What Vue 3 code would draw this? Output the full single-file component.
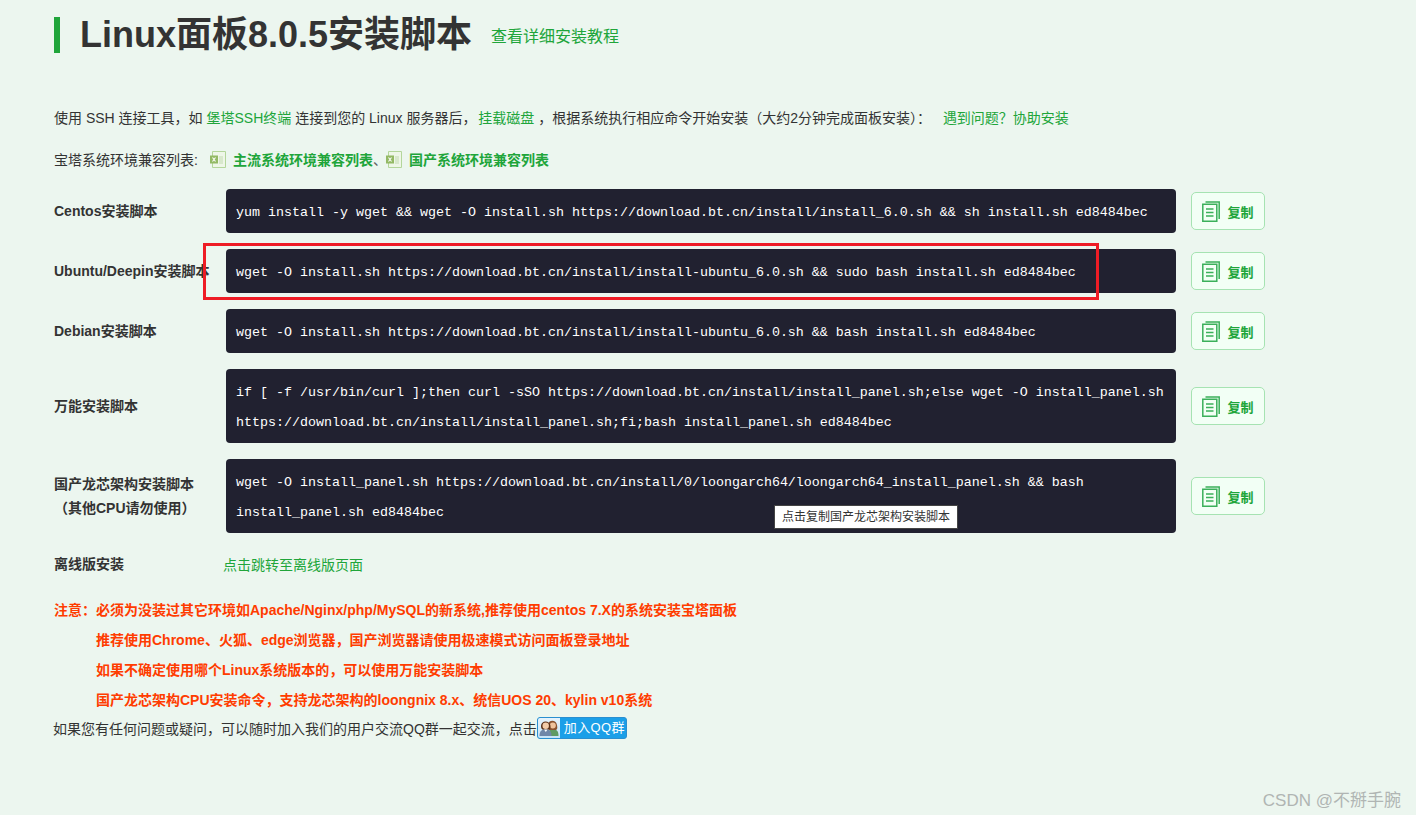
<script setup>
const rows = [
  { label: ['Centos安装脚本'], code: 'yum install -y wget && wget -O install.sh https://download.bt.cn/install/install_6.0.sh && sh install.sh ed8484bec' },
  { label: ['Ubuntu/Deepin安装脚本'], code: 'wget -O install.sh https://download.bt.cn/install/install-ubuntu_6.0.sh && sudo bash install.sh ed8484bec', mark: true },
  { label: ['Debian安装脚本'], code: 'wget -O install.sh https://download.bt.cn/install/install-ubuntu_6.0.sh && bash install.sh ed8484bec' },
  { label: ['万能安装脚本'], code: 'if [ -f /usr/bin/curl ];then curl -sSO https://download.bt.cn/install/install_panel.sh;else wget -O install_panel.sh https://download.bt.cn/install/install_panel.sh;fi;bash install_panel.sh ed8484bec' },
  { label: ['国产龙芯架构安装脚本', '（其他CPU请勿使用）'], code: 'wget -O install_panel.sh https://download.bt.cn/install/0/loongarch64/loongarch64_install_panel.sh && bash install_panel.sh ed8484bec', tip: '点击复制国产龙芯架构安装脚本' },
]
const notes = [
  '注意：必须为没装过其它环境如Apache/Nginx/php/MySQL的新系统,推荐使用centos 7.X的系统安装宝塔面板',
  '推荐使用Chrome、火狐、edge浏览器，国产浏览器请使用极速模式访问面板登录地址',
  '如果不确定使用哪个Linux系统版本的，可以使用万能安装脚本',
  '国产龙芯架构CPU安装命令，支持龙芯架构的loongnix 8.x、统信UOS 20、kylin v10系统',
]
</script>

<template>
  <div class="page">
    <header class="head">
      <h1 class="title">Linux面板8.0.5安装脚本</h1>
      <a class="tutorial">查看详细安装教程</a>
    </header>

    <p class="intro">
      使用 SSH 连接工具，如 <a class="link">堡塔SSH终端</a> 连接到您的 Linux 服务器后， <a class="link mount">挂载磁盘</a> ，根据系统执行相应命令开始安装（大约2分钟完成面板安装）： <a class="link help">遇到问题？协助安装</a>
    </p>

    <p class="compat">
      <span>宝塔系统环境兼容列表:</span>
      <svg class="xls first" viewBox="0 0 16 17" width="16" height="17">
        <path d="M2.500.5h13v16h-13z" fill="#eef6e8" stroke="#b4d69b" />
        <path d="M9 5h4v8H9z" fill="#d8e8cc" />
        <path d="M0 4.500h8v8H0z" fill="#93b964" />
        <path d="M2.500 6.500l3 4M5.500 6.500l-3 4" stroke="#fff" stroke-width="1.100" />
      </svg>
      <b class="strong">主流系统环境兼容列表</b><span class="sep">、</span>
      <svg class="xls second" viewBox="0 0 16 17" width="16" height="17">
        <path d="M2.500.5h13v16h-13z" fill="#eef6e8" stroke="#b4d69b" />
        <path d="M9 5h4v8H9z" fill="#d8e8cc" />
        <path d="M0 4.500h8v8H0z" fill="#93b964" />
        <path d="M2.500 6.500l3 4M5.500 6.500l-3 4" stroke="#fff" stroke-width="1.100" />
      </svg>
      <b class="strong">国产系统环境兼容列表</b>
    </p>

    <section class="rows">
      <div v-for="row in rows" :key="row.code" class="row">
        <div class="label"><div v-for="l in row.label" :key="l">{{ l }}</div></div>
        <div class="code">
          {{ row.code }}
          <span v-if="row.tip" class="tip">{{ row.tip }}</span>
        </div>
        <button class="copy">
          <svg viewBox="0 0 18 21" width="18" height="21" fill="none" stroke="#3bb05a" stroke-width="1.500">
            <path d="M3.500 1h13.700v17" />
            <path d="M.8 3.200h14v17H.8z" fill="#f3fff5" />
            <path d="M4 8h7.500M4 11.500h7.500M4 15h7.500" />
          </svg>
          <span>复制</span>
        </button>
        <div v-if="row.mark" class="mark"></div>
      </div>
    </section>

    <div class="offline">
      <span class="label offline-label">离线版安装</span>
      <a class="link">点击跳转至离线版页面</a>
    </div>

    <ul class="notes">
      <li v-for="(n, i) in notes" :key="n" :class="{ indent: i > 0 }">{{ n }}</li>
    </ul>

    <p class="qq">
      如果您有任何问题或疑问，可以随时加入我们的用户交流QQ群一起交流，点击<span class="qq-btn"><span class="qq-ico"><svg viewBox="0 0 20 18" width="20" height="18">
        <path d="M9 17c0-5 1.500-7 5-7s5.500 2 5.500 7z" fill="#5f9a62" />
        <path d="M9 6c0-5 8-6 9 0 .5 3 .5 4-1 5h-7C9.500 9 9 8 9 6z" fill="#8a5230" />
        <circle cx="13.800" cy="6.500" r="3" fill="#f0c29c" />
        <path d="M.5 17c0-5 2.500-7 6-7s6 2 6 7z" fill="#6f86a8" />
        <path d="M2 7c0-6 9-6 9.500 0 .1 2-.5 3-1.500 3.500H3.500C2.500 10 2 9 2 7z" fill="#5a3018" />
        <circle cx="6.700" cy="6.800" r="3.200" fill="#f3cba8" />
        <path d="M5 10.500h3.500L6.800 13z" fill="#fff" />
      </svg></span><span class="qq-text">加入QQ群</span></span>
    </p>

    <div class="watermark">CSDN @不掰手腕</div>
  </div>
</template>

<style>
html, body { margin: 0; background: #fff; }
</style>

<style scoped>
.page {
  position: relative;
  box-sizing: border-box;
  width: 1416px;
  height: 815px;
  padding: 17px 0 0 54px;
  background: #ecf6ef;
  color: #333;
  font-family: "Liberation Sans", "Noto Sans CJK SC", sans-serif;
  font-size: 14px;
  overflow: hidden;
}
.head { display: flex; align-items: center; height: 36px; border-left: 6px solid #20a53a; padding-left: 20px; }
.title { margin: 0; font-size: 36px; font-weight: 700; line-height: 36px; color: #333; }
.tutorial { margin-left: 19px; font-size: 16px; color: #20a53a; }
.intro { margin: 55px 0 0; line-height: 20px; height: 20px; white-space: nowrap; }
.link { color: #20a53a; }
.mount { margin-left: -2px; }
.help { margin-left: 8px; }
.compat { display: flex; align-items: center; margin: 21px 0 0; height: 20px; white-space: nowrap; }
.xls { flex: none; margin-right: 7px; }
.xls.first { margin-left: 12px; }
.xls.second { margin-left: -1px; }
.strong { color: #20a53a; font-weight: 700; }
.sep { color: #666; }
.rows { margin-top: 20px; display: flex; flex-direction: column; gap: 16px; }
.row { position: relative; display: flex; align-items: center; }
.label { width: 172px; flex: none; font-weight: 700; line-height: 24px; color: #333; white-space: nowrap; }
.code {
  position: relative;
  box-sizing: border-box;
  width: 950px;
  flex: none;
  padding: 9px 10px 5px;
  border-radius: 4px;
  background: #212130;
  color: #fff;
  font-family: "Liberation Mono", "Noto Sans CJK SC", monospace;
  font-size: 13.33px;
  line-height: 30px;
}
.copy {
  box-sizing: border-box;
  display: flex;
  align-items: center;
  justify-content: center;
  gap: 7px;
  width: 74px;
  height: 38px;
  margin-left: 15px;
  padding: 0;
  border: 1px solid #a6e3b2;
  border-radius: 5px;
  background: #f2fff5;
  color: #20a53a;
  font-family: inherit;
  font-size: 13px;
  font-weight: 700;
}
.mark {
  position: absolute;
  left: 149px;
  top: -6px;
  width: 896px;
  height: 57px;
  box-sizing: border-box;
  border: 3px solid #ee1c25;
  pointer-events: none;
}
.tip {
  position: absolute;
  left: 548px;
  top: 46px;
  height: 24px;
  padding: 0 7px;
  background: #fff;
  border: 1px solid #444;
  box-sizing: border-box;
  color: #333;
  font-family: "Liberation Sans", "Noto Sans CJK SC", sans-serif;
  font-size: 12px;
  line-height: 23px;
  white-space: nowrap;
}
.offline { display: flex; align-items: center; margin-top: 19px; height: 24px; }
.offline-label { width: 169px; }
.notes { list-style: none; margin: 19px 0 0; padding: 0; color: #ff3c00; font-weight: 700; }
.notes li { line-height: 30px; height: 30px; white-space: nowrap; }
.indent { padding-left: 42px; }
.qq { display: flex; align-items: center; margin: -2px 0 0 -1px; height: 30px; white-space: nowrap; }
.qq-btn { display: inline-flex; align-items: stretch; width: 90px; height: 22px; margin-top: -1px; border: 1px solid #2a8fd0; border-radius: 3px; background: #1b9fe8; color: #fff; font-size: 13px; box-sizing: border-box; overflow: hidden; }
.qq-ico { display: flex; align-items: center; justify-content: center; width: 22px; flex: none; background: linear-gradient(#e6f3fc, #c5e3f7); }
.qq-text { padding-left: 4px; line-height: 20px; letter-spacing: 0.4px; }
.watermark { position: absolute; right: 15px; bottom: 4px; font-size: 17px; color: #b0b5b3; }
</style>
